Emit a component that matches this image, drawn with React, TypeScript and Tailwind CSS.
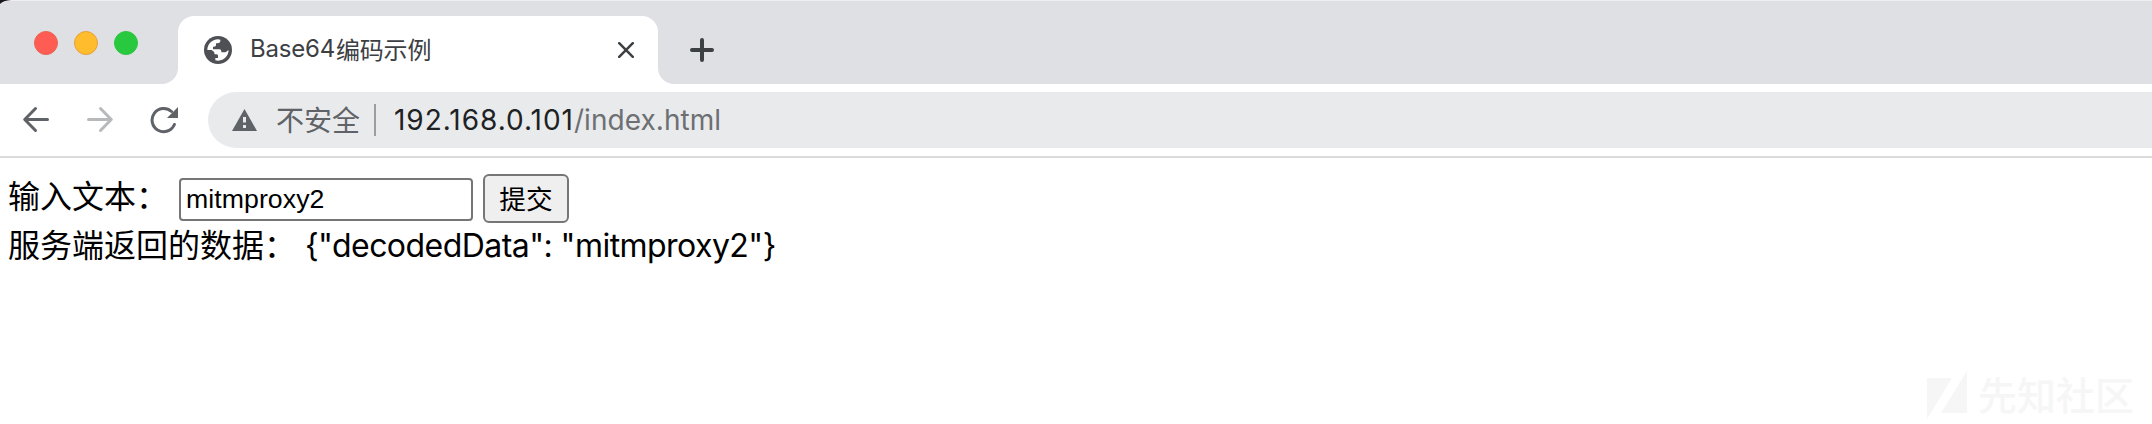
function Globe() {
  return (
    <svg className="h-7 w-7 shrink-0" viewBox="0 0 84 84" fill="none">
      <circle cx="42" cy="42" r="42" fill="#4e5056" />
      <path
        d="M10 42C10 24 24 10 42 9.500L49 11V16Q48 22 41 22H36V28Q36 32 30 32H27V40H46Q52 40 52 46V49H63Q67 49 69 45L74 43C73 60 60 74 43 74L34 73V66H42V59Q42 55 37 55H33Q31 55 31 52V49L23 42Z"
        fill="#fff"
      />
    </svg>
  );
}

function TabStrip() {
  return (
    <div className="relative flex h-[84px] bg-[#dfe0e4]">
      <div className="absolute inset-x-0 top-0 h-px bg-[#eeeef0]" />
      <svg className="absolute left-0 top-0 h-3 w-4" viewBox="0 0 16 12">
        <path d="M0 0H16C8 0 3 1.500 0 5Z" fill="#eeeef0" />
        <path d="M0 0H11C6 .500 2 1.500 0 4Z" fill="#19171b" />
      </svg>
      <div className="flex w-[178px] shrink-0 gap-4 pl-[34px] pt-[31px]">
        <div className="h-6 w-6 rounded-full border border-[#e9654f] bg-[#ff5c54]" />
        <div className="h-6 w-6 rounded-full border border-[#e6a03c] bg-[#ffbd2e]" />
        <div className="h-6 w-6 rounded-full border border-[#2fc440] bg-[#28c93f]" />
      </div>
      <div className="relative mt-4 flex h-[68px] w-[480px] shrink-0 items-center rounded-t-[16px] bg-white pl-[26px]">
        <svg className="absolute -left-4 bottom-0 h-4 w-4" viewBox="0 0 16 16">
          <path d="M16 0V16H0A16 16 0 0 0 16 0Z" fill="#fff" />
        </svg>
        <svg className="absolute -right-4 bottom-0 h-4 w-4" viewBox="0 0 16 16">
          <path d="M0 0V16H16A16 16 0 0 1 0 0Z" fill="#fff" />
        </svg>
        <Globe />
        <div className="mb-0.5 ml-[18px] flex w-[368px] items-center whitespace-nowrap text-[24px] leading-8 text-[#3c4043]">
          <span className="w-[86px] font-['Inter'] tracking-[-0.2px]">Base64</span>
          <span className="font-['Noto_Sans_CJK_SC',sans-serif] tracking-[-0.2px]">编码示例</span>
        </div>
        <svg
          className="h-4 w-4 shrink-0"
          viewBox="0 0 16 16"
          fill="none"
          stroke="#3c4043"
          strokeWidth="2.500"
          strokeLinecap="round"
        >
          <path d="M1.200 1.200 14.800 14.800M14.800 1.200 1.200 14.800" />
        </svg>
      </div>
      <svg
        className="ml-8 mt-[38px] h-6 w-6 shrink-0"
        viewBox="0 0 24 24"
        stroke="#3c4043"
        strokeWidth="4"
        strokeLinecap="round"
      >
        <path d="M12 2V22M2 12H22" />
      </svg>
    </div>
  );
}

function Toolbar() {
  return (
    <div className="flex h-[74px] items-start border-b-2 border-[#dadbdc] bg-white pt-2">
      <svg
        className="ml-[22px] mt-[14px] h-7 w-7 shrink-0"
        viewBox="0 0 28 28"
        fill="none"
        stroke="#5f6368"
        strokeWidth="3"
        strokeLinecap="round"
        strokeLinejoin="round"
      >
        <path d="M25.500 13.500H3M13.500 2.500 2.700 13.500 13.500 24.500" />
      </svg>
      <svg
        className="ml-9 mt-[14px] h-7 w-7 shrink-0"
        viewBox="0 0 28 28"
        fill="none"
        stroke="#b8b9bb"
        strokeWidth="3"
        strokeLinecap="round"
        strokeLinejoin="round"
      >
        <path d="M2.500 13.500H25M14.500 2.500 25.300 13.500 14.500 24.500" />
      </svg>
      <svg className="ml-9 mt-[14px] h-7 w-7 shrink-0" viewBox="0 0 28 28" fill="none">
        <path
          d="M24.400 18.500A11.600 11.600 0 1 1 21.500 5.500"
          stroke="#5f6368"
          strokeWidth="3"
          strokeLinecap="round"
        />
        <path d="M28 1V12H17Z" fill="#5f6368" />
      </svg>
      <div className="ml-[30px] flex h-14 flex-1 items-center rounded-l-full bg-[#e9eaec] pl-6">
        <svg className="h-[22px] w-[25px] shrink-0" viewBox="0 0 25 22">
          <path d="M12.500 0 25 22H0Z" fill="#5f6368" />
          <path d="M11 8H14V13.500H11ZM11 16H14V19H11Z" fill="#e9eaec" />
        </svg>
        <span className="mb-0.5 ml-[19px] w-[98px] whitespace-nowrap font-['Noto_Sans_CJK_SC',sans-serif] text-[28px] leading-10 text-[#5f6368]">
          不安全
        </span>
        <div className="h-8 w-0.5 bg-[#9b9da0]" />
        <span className="ml-[18px] whitespace-nowrap font-['Inter'] text-[28px] leading-10 text-[#202124]">
          <span className="tracking-[0.97px]">192.168.0.101</span>
          <span className="tracking-[0.05px] text-[#6d6f73]">/index.html</span>
        </span>
      </div>
    </div>
  );
}

function Watermark() {
  return (
    <div className="flex items-start text-[#f6f6f7]">
      <svg className="mt-[5px] h-12 w-10 shrink-0" viewBox="0 0 40 48" fill="currentColor">
        <path d="M0 7H25L0 48ZM40 0V42H14Z" />
      </svg>
      <span className="-mt-0.5 ml-[11px] whitespace-nowrap font-['Noto_Sans_CJK_SC',sans-serif] text-[39px] font-medium leading-[58px]">
        先知社区
      </span>
    </div>
  );
}

export default function App() {
  return (
    <div className="flex h-[424px] flex-col overflow-hidden bg-white text-black">
      <TabStrip />
      <Toolbar />
      <main className="flex flex-1 flex-col pl-2 pt-4">
        <form className="flex h-[50px] items-start" onSubmit={(e) => e.preventDefault()}>
          <label
            htmlFor="text"
            className="w-[171px] whitespace-nowrap font-['Noto_Sans_CJK_SC',sans-serif] text-[32px] leading-[40px]"
          >
            输入文本：
          </label>
          <input
            id="text"
            defaultValue="mitmproxy2"
            className="mt-1 h-[43px] w-[294px] rounded-[4px] border-2 border-[#767676] bg-white px-[5px] font-['Liberation_Sans'] text-[26.67px] tracking-[0.07px]"
          />
          <button className="ml-[10px] h-[49px] w-[86px] rounded-[6px] border-2 border-[#767676] bg-[#efefef] pb-0.5 font-['Noto_Sans_CJK_SC',sans-serif] text-[26.67px] leading-[42px]">
            提交
          </button>
        </form>
        <div className="flex h-[44px] items-center whitespace-nowrap text-[32px] leading-[44px]">
          <span className="mb-1.5 w-[297px] font-['Noto_Sans_CJK_SC',sans-serif]">服务端返回的数据：</span>
          <span className="font-['Inter'] tracking-[-0.55px]">{'{"decodedData": "mitmproxy2"}'}</span>
        </div>
      </main>
      <div className="flex h-[58px] shrink-0 justify-end pr-[18px]">
        <Watermark />
      </div>
    </div>
  );
}
